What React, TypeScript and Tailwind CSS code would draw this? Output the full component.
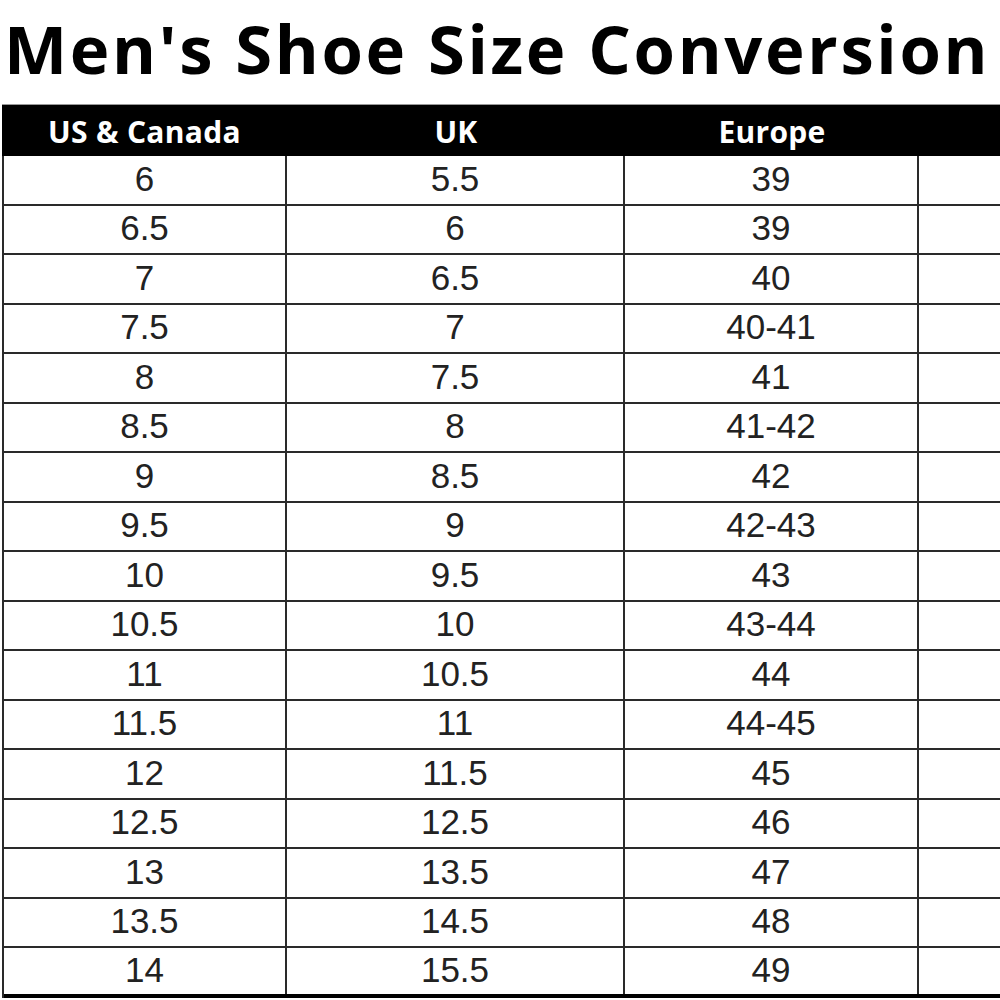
import React from "react";

const rows: [string, string, string][] = [
  ["6", "5.5", "39"],
  ["6.5", "6", "39"],
  ["7", "6.5", "40"],
  ["7.5", "7", "40-41"],
  ["8", "7.5", "41"],
  ["8.5", "8", "41-42"],
  ["9", "8.5", "42"],
  ["9.5", "9", "42-43"],
  ["10", "9.5", "43"],
  ["10.5", "10", "43-44"],
  ["11", "10.5", "44"],
  ["11.5", "11", "44-45"],
  ["12", "11.5", "45"],
  ["12.5", "12.5", "46"],
  ["13", "13.5", "47"],
  ["13.5", "14.5", "48"],
  ["14", "15.5", "49"],
];

export default function App() {
  return (
    <div className="w-[1000px] h-[1000px] overflow-hidden bg-white relative">
      <div className="h-[104px] pl-[4px] pt-[8px]">
        <h1
          className="text-[67px] leading-[80px] font-bold text-black whitespace-nowrap tracking-[2.65px]"
          style={{ fontFamily: '"Open Sans", sans-serif' }}
        >
          Men's Shoe Size Conversion
        </h1>
      </div>
      <div className="ml-[2px] w-[1200px] border-t border-[#999]">
        <div
          className="flex h-[51px] bg-black text-white text-[30px] font-bold items-center tracking-[0.3px]"
          style={{ fontFamily: '"Open Sans", sans-serif' }}
        >
          <div className="w-[285px] text-center pt-[2px]">US &amp; Canada</div>
          <div className="w-[338px] text-center pt-[2px]">UK</div>
          <div className="w-[294px] text-center pt-[2px]">Europe</div>
          <div className="flex-1"></div>
        </div>
        <div
          className="border-l-2 border-[#2a2a2a] text-[35px] text-[#222]"
          style={{ fontFamily: '"Liberation Sans", Arial, sans-serif' }}
        >
          {rows.map((r, i) => (
            <div
              key={i}
              className={`flex h-[49.5px] ${i === rows.length - 1 ? "border-b-4 border-black" : "border-b-2 border-[#2a2a2a]"}`}
            >
              <div className="w-[283px] border-r-2 border-[#2a2a2a] flex items-center justify-center leading-none pb-[3px]">
                {r[0]}
              </div>
              <div className="w-[338px] border-r-2 border-[#2a2a2a] flex items-center justify-center leading-none pb-[3px]">
                {r[1]}
              </div>
              <div className="w-[294px] border-r-2 border-[#2a2a2a] flex items-center justify-center leading-none pb-[3px]">
                {r[2]}
              </div>
              <div className="flex-1"></div>
            </div>
          ))}
        </div>
      </div>
    </div>
  );
}
